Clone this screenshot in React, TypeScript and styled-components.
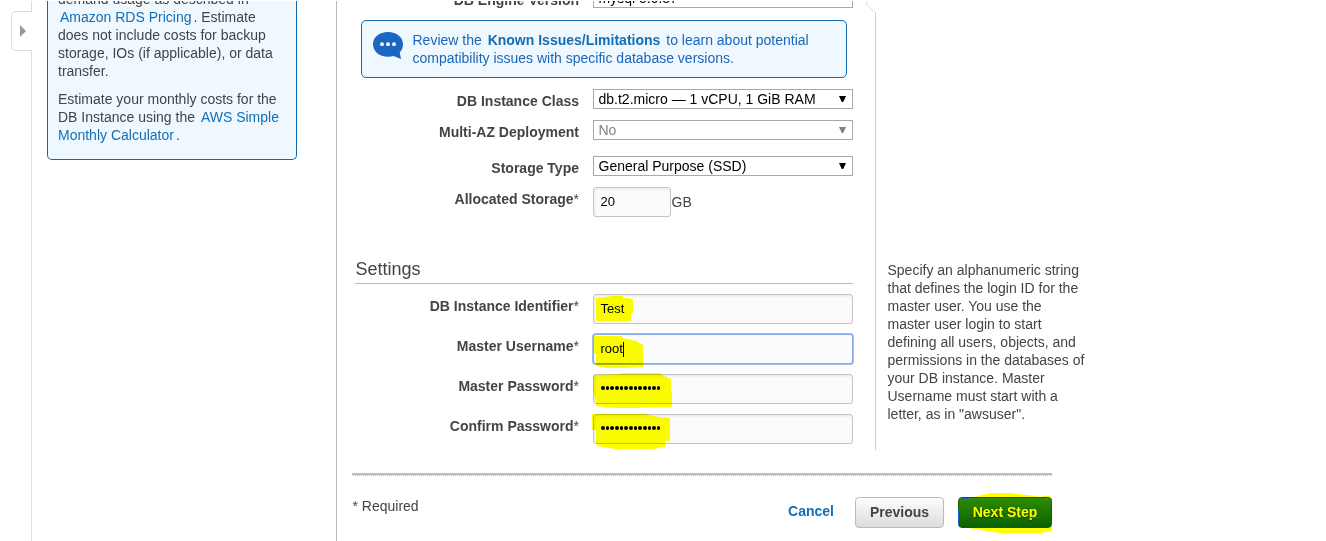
import React from 'react';
import styled, { createGlobalStyle, css } from 'styled-components';

const GlobalStyle = createGlobalStyle`
  * { box-sizing: border-box; }
  body {
    margin: 0;
    background: #fff;
    overflow: hidden;
    color: #444;
    font: 14px/18px "Liberation Sans", Arial, sans-serif;
  }
`;

const Page = styled.div`
  display: flex;
  width: 1326px;
  height: 541px;
  padding-top: 1px;
  overflow: hidden;
`;

const Rail = styled.div`
  display: flex;
  flex-direction: column;
  flex: none;
  width: 32px;
`;

const RailEdge = styled.div<{ $height?: number }>`
  border-right: 1px solid #ddd;
  ${(p) => (p.$height ? css`height: ${p.$height}px;` : css`flex: 1;`)}
`;

const RailHandle = styled.div`
  display: flex;
  align-items: center;
  height: 40px;
  margin-left: 11px;
  padding-left: 8px;
  border: 1px solid #ddd;
  border-right: 0;
  border-radius: 5px 0 0 5px;
`;

const Sidebar = styled.aside`
  flex: none;
  width: 305px;
  height: 540px;
  padding-left: 15px;
  border-right: 1px solid #bbb;
  overflow: hidden;
`;

const CostCard = styled.div`
  width: 250px;
  margin-top: -12px;
  padding: 1px 0 15px 10px;
  background: #f0f8ff;
  border: 1px solid #0e69b0;
  border-top: 0;
  border-radius: 0 0 5px 5px;
`;

const Paragraph = styled.p`
  margin: 0;
  white-space: nowrap;
  & + & { margin-top: 10px; }
`;

const Line = styled.span`
  display: block;
  white-space: nowrap;
`;

const Link = styled.a<{ $lead?: number; $trail?: number }>`
  color: #146eb4;
  margin: 0 ${(p) => p.$trail ?? 0}px 0 ${(p) => p.$lead ?? 0}px;
`;

const Main = styled.main`
  display: flex;
  flex-direction: column;
  flex: 1;
  height: 540px;
  overflow: hidden;
`;

const Upper = styled.div`
  display: flex;
  height: 449px;
`;

const Form = styled.form`
  flex: none;
  width: 528px;
  padding-left: 18px;
`;

const Row = styled.div<{ $height: number; $top?: number }>`
  display: flex;
  align-items: flex-start;
  height: ${(p) => p.$height}px;
  margin-top: ${(p) => p.$top ?? 0}px;
`;

const Label = styled.label`
  flex: none;
  width: 224px;
  margin-right: 14px;
  padding-top: 3px;
  font-weight: bold;
  text-align: right;
  white-space: nowrap;
  sup { font-size: inherit; font-weight: normal; vertical-align: baseline; line-height: 0; }
`;

const Select = styled.div<{ $disabled?: boolean }>`
  display: flex;
  align-items: center;
  justify-content: space-between;
  width: 260px;
  height: 20px;
  padding: 0 6px 0 4.5px;
  border: 1px solid #a9a9a9;
  background: #fff;
  color: ${(p) => (p.$disabled ? '#808080' : '#000')};
  white-space: nowrap;
`;

const Field = styled.div<{ $width?: number; $focused?: boolean }>`
  position: relative;
  display: flex;
  align-items: center;
  width: ${(p) => p.$width ?? 260}px;
  height: 30px;
  padding-left: 6.5px;
  border: 1px solid #c4c4c4;
  border-radius: 3px;
  background: #fbfbfb;
  color: #000;
  font-size: 13px;
  box-shadow: inset 1px 1px 3px rgba(0, 0, 0, 0.08);
  ${(p) =>
    p.$focused &&
    css`
      border-color: #8aabea;
      box-shadow: 0 0 0 1px #9dbcf2;
    `}
`;

const Caret = styled.span`
  width: 1px;
  height: 15px;
  background: #000;
`;

const Dots = styled.span`
  display: flex;
  gap: 1.07px;
  padding: 0 0 2px 0.5px;
  i {
    width: 3.6px;
    height: 3.6px;
    border-radius: 2px;
    background: #000;
  }
`;

const Unit = styled.span`
  padding: 6px 0 0 0.5px;
`;

const Notice = styled.div`
  display: flex;
  width: 486px;
  height: 58px;
  margin: 12px 0 0 6px;
  padding: 10px 0 0 11px;
  border: 1px solid #0e69b0;
  border-radius: 5px;
  background: #f0f8ff;
  color: #1a66b8;
  svg { flex: none; margin: 1px 9.5px 0 0; }
`;

const SectionTitle = styled.h2`
  width: 498px;
  height: 25px;
  margin: 42px 0 10px;
  padding-left: 0.5px;
  border-bottom: 1px solid #bbb;
  font-size: 18px;
  font-weight: normal;
  line-height: 20px;
`;

const Pointer = styled.svg`
  flex: none;
  width: 12px;
  height: 449px;
`;

const Help = styled.div`
  padding: 260px 0 0 10.5px;
`;

const Footer = styled.footer`
  width: 700px;
  margin: 23px 0 0 15px;
`;

const Rule = styled.div`
  height: 3px;
  border-top: 2px solid #bbb;
  background: repeating-linear-gradient(90deg, #fff 0 1px, #bbb 1px 2px);
`;

const Actions = styled.div`
  display: flex;
  align-items: flex-start;
  padding-top: 21px;
`;

const Required = styled.span`
  flex: 1;
  padding-left: 0.5px;
`;

const Cancel = styled.a`
  margin: 5px 21px 0 0;
  color: #146eb4;
  font-weight: bold;
`;

const Button = styled.div<{ $primary?: boolean }>`
  position: relative;
  width: ${(p) => (p.$primary ? 94 : 89)}px;
  height: 31px;
  margin-left: ${(p) => (p.$primary ? 14 : 0)}px;
  border: 1px solid ${(p) => (p.$primary ? '#1a5a00' : '#bbb')};
  border-radius: 4px;
  background: ${(p) => (p.$primary ? 'linear-gradient(#2f8b00, #0b6200)' : 'linear-gradient(#fdfdfd, #dcdcdc)')};
  color: ${(p) => (p.$primary ? '#fff' : '#444')};
  font-weight: bold;
  line-height: 29px;
  text-align: center;
  text-shadow: ${(p) => (p.$primary ? '0 1px 2px rgba(0,0,0,.6)' : 'none')};
`;

/* Marker strokes lie over the control they emphasise. */
const Marker = styled.svg<{ $plain?: boolean }>`
  position: absolute;
  left: -7px;
  top: -7px;
  width: 110px;
  height: 46px;
  mix-blend-mode: ${(p) => (p.$plain ? 'normal' : 'multiply')};
  pointer-events: none;
  fill: #ff0;
`;

const Highlight = ({ d }: { d: string }) => (
  <Marker viewBox="0 0 110 46">
    <path d={d} />
  </Marker>
);

const Arrow = () => (
  <svg width="7" height="6" viewBox="0 0 7 6">
    <path d="M0 0h7L4.200 6H2.800z" fill="currentColor" />
  </svg>
);

const Password = () => (
  <Dots>
    {Array.from({ length: 13 }, (_, i) => (
      <i key={i} />
    ))}
  </Dots>
);

const helpLines = [
  'Specify an alphanumeric string',
  'that defines the login ID for the',
  'master user. You use the',
  'master user login to start',
  'defining all users, objects, and',
  'permissions in the databases of',
  'your DB instance. Master',
  'Username must start with a',
  'letter, as in "awsuser".',
];

export default function App() {
  return (
    <>
      <GlobalStyle />
      <Page>
        <Rail>
          <RailEdge $height={10} />
          <RailHandle>
            <svg width="6" height="12" viewBox="0 0 6 12">
              <path d="M0 0l6 6-6 6z" fill="#999" />
            </svg>
          </RailHandle>
          <RailEdge />
        </Rail>
        <Sidebar>
          <CostCard>
            <Paragraph>
              <Line>demand usage as described in</Line>
              <Line><Link $lead={2} $trail={2}>Amazon RDS Pricing</Link>. Estimate</Line>
              <Line>does not include costs for backup</Line>
              <Line>storage, IOs (if applicable), or data</Line>
              <Line>transfer.</Line>
            </Paragraph>
            <Paragraph>
              <Line>Estimate your monthly costs for the</Line>
              <Line>DB Instance using the <Link $lead={2}>AWS Simple</Link></Line>
              <Line><Link $trail={2}>Monthly Calculator</Link>.</Line>
            </Paragraph>
          </CostCard>
        </Sidebar>
        <Main>
          <Upper>
            <Form>
              <Row $height={20} $top={-13}>
                <Label>DB Engine Version</Label>
                <Select>mysql 5.6.37<Arrow /></Select>
              </Row>
              <Notice>
                <svg width="30" height="28" viewBox="0 0 30 28">
                  <path d="M15 0c8.600 0 15 5.200 15 12.200 0 3.300-1.200 6.200-3.300 8.400L28 27l-7.500-3.100c-1.700.500-3.500.800-5.500.800C6.400 24.700 0 19.400 0 12.200 0 5.200 6.400 0 15 0z" fill="#1a66c0" />
                  <circle cx="9" cy="12.200" r="1.900" fill="#fff" />
                  <circle cx="15" cy="12.200" r="1.900" fill="#fff" />
                  <circle cx="21" cy="12.200" r="1.900" fill="#fff" />
                </svg>
                <div>
                  <Line>Review the <Link $lead={2} $trail={2}><b>Known Issues/Limitations</b></Link> to learn about potential</Line>
                  <Line>compatibility issues with specific database versions.</Line>
                </div>
              </Notice>
              <Row $height={20} $top={11}>
                <Label>DB Instance Class</Label>
                <Select>db.t2.micro — 1 vCPU, 1 GiB RAM<Arrow /></Select>
              </Row>
              <Row $height={20} $top={11}>
                <Label>Multi-AZ Deployment</Label>
                <Select $disabled>No<Arrow /></Select>
              </Row>
              <Row $height={20} $top={16}>
                <Label>Storage Type</Label>
                <Select>General Purpose (SSD)<Arrow /></Select>
              </Row>
              <Row $height={30} $top={11}>
                <Label>Allocated Storage<sup>*</sup></Label>
                <Field $width={78}>20</Field>
                <Unit>GB</Unit>
              </Row>
              <SectionTitle>Settings</SectionTitle>
              <Row $height={30}>
                <Label>DB Instance Identifier<sup>*</sup></Label>
                <Field>
                  Test
                  <Highlight d="M9 10l9-1 10-1h8v2h6l4 2v13h-2v8H9z" />
                </Field>
              </Row>
              <Row $height={30} $top={10}>
                <Label>Master Username<sup>*</sup></Label>
                <Field $focused>
                  root<Caret />
                  <Highlight d="M7 8h28v2l14 3 7 4v22h-6l-10 1H17l-7-2H9V25H7z" />
                </Field>
              </Row>
              <Row $height={30} $top={10}>
                <Label>Master Password<sup>*</sup></Label>
                <Field>
                  <Password />
                  <Highlight d="M6 8l1-1 27-1V5h38l5 3 7 3v12h1v16H70l-20 1H26l-17-2v-4L6 22z" />
                </Field>
              </Row>
              <Row $height={30} $top={10}>
                <Label>Confirm Password<sup>*</sup></Label>
                <Field>
                  <Password />
                  <Highlight d="M5 6h53l14 3 11 1v23h-5v6l-12 2H28l-17-3-2-2V22H5z" />
                </Field>
              </Row>
            </Form>
            <Pointer viewBox="0 0 12 449">
              <path d="M.5 2.500L3 .5M.5 2l10 10" fill="none" stroke="#ddd" />
              <path d="M10.500 12v437" fill="none" stroke="#ccc" />
            </Pointer>
            <Help>
              {helpLines.map((line) => (
                <Line key={line}>{line}</Line>
              ))}
            </Help>
          </Upper>
          <Footer>
            <Rule />
            <Actions>
              <Required>* Required</Required>
              <Cancel>Cancel</Cancel>
              <Button>Previous</Button>
              <Button $primary>
                Next Step
                <Highlight d="M7 9l14-2 8-3 10-2h20l16 2 15 2v-1h8l2 3v32l-10 2H47l-20-3-14-3-6-3z" />
                <Marker $plain viewBox="0 0 110 46">
                  <path d="M9 7.500h8M6.500 18v16M51 26.500h19M77 26.500h10M99.500 8v3" fill="none" stroke="#1467c8" />
                </Marker>
              </Button>
            </Actions>
          </Footer>
        </Main>
      </Page>
    </>
  );
}
